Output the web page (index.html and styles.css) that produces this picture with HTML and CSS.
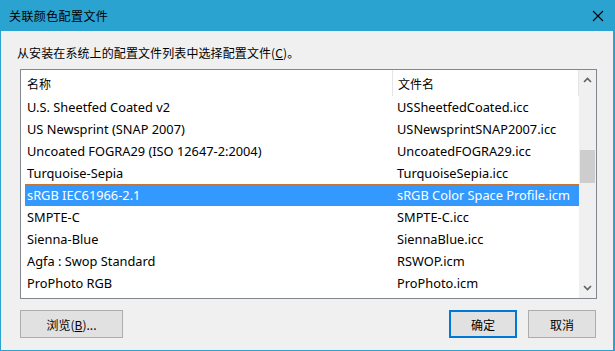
FILE: index.html
```html
<!DOCTYPE html>
<html lang="zh-CN">
<head>
    <meta charset="UTF-8">
    <title>关联颜色配置文件</title>
    <link rel="stylesheet" href="styles.css">
</head>
<body>
    <div class="window">
        <div class="titlebar">
            <span class="title">关联颜色配置文件</span>
            <svg class="close" width="12" height="12" viewBox="0 0 12 12">
                <path d="M1 1 L11 11 M11 1 L1 11" stroke="#000" stroke-width="1.1" fill="none"/>
            </svg>
        </div>

        <div class="content">
            <p class="label">从安装在系统上的配置文件列表中选择配置文件(<u>C</u>)。</p>

            <div class="listbox">
                <div class="list">
                    <div class="header">
                        <div class="col name">名称</div>
                        <div class="col file">文件名</div>
                    </div>
                    <div class="rows">
                        <div class="row"><span class="col name">U.S. Sheetfed Coated v2</span><span class="col file">USSheetfedCoated.icc</span></div>
                        <div class="row"><span class="col name">US Newsprint (SNAP 2007)</span><span class="col file">USNewsprintSNAP2007.icc</span></div>
                        <div class="row"><span class="col name">Uncoated FOGRA29 (ISO 12647-2:2004)</span><span class="col file">UncoatedFOGRA29.icc</span></div>
                        <div class="row"><span class="col name">Turquoise-Sepia</span><span class="col file">TurquoiseSepia.icc</span></div>
                        <div class="row selected"><span class="col name">sRGB IEC61966-2.1</span><span class="col file">sRGB Color Space Profile.icm</span></div>
                        <div class="row"><span class="col name">SMPTE-C</span><span class="col file">SMPTE-C.icc</span></div>
                        <div class="row"><span class="col name">Sienna-Blue</span><span class="col file">SiennaBlue.icc</span></div>
                        <div class="row"><span class="col name">Agfa : Swop Standard</span><span class="col file">RSWOP.icm</span></div>
                        <div class="row"><span class="col name">ProPhoto RGB</span><span class="col file">ProPhoto.icm</span></div>
                    </div>
                </div>
                <div class="scrollbar">
                    <svg class="arrow" width="9" height="6" viewBox="0 0 9 6">
                        <path d="M1 5 L4.5 1.5 L8 5" stroke="#606060" stroke-width="1.6" fill="none"/>
                    </svg>
                    <div class="track">
                        <div class="thumb"></div>
                    </div>
                    <svg class="arrow" width="9" height="6" viewBox="0 0 9 6">
                        <path d="M1 1 L4.5 4.5 L8 1" stroke="#606060" stroke-width="1.6" fill="none"/>
                    </svg>
                </div>
            </div>

            <div class="buttons">
                <button class="btn browse">浏览(<u>B</u>)...</button>
                <div class="spacer"></div>
                <button class="btn default">确定</button>
                <button class="btn">取消</button>
            </div>
        </div>
    </div>
</body>
</html>
```

FILE: styles.css
```css
* {
    margin: 0;
    padding: 0;
    box-sizing: border-box;
}

body {
    font-family: 'Noto Sans', 'Noto Sans CJK SC', sans-serif;
    font-size: 12px;
    color: #000;
    background: #f0f0f0;
}

.window {
    width: 615px;
    height: 351px;
    border: 1px solid #2ba3d0;
    border-top: none;
    border-right-width: 2px;
    background: #f0f0f0;
}

.titlebar {
    height: 31px;
    margin: 0 -2px 0 -1px;
    background: #2ba3d0;
    display: flex;
    align-items: center;
    justify-content: space-between;
    padding: 0 11px 0 9px;
}

.title {
    font-family: 'Noto Sans CJK SC', sans-serif;
    font-size: 12px;
    letter-spacing: 0.4px;
}

.close {
    display: block;
}

.content {
    padding: 12px 17px 0 16px;
}

.label {
    font-family: 'Noto Sans CJK SC', sans-serif;
    line-height: 20px;
    letter-spacing: 0.1px;
    margin-bottom: 6px;
}

.listbox {
    margin-left: 3px;
    width: 577px;
    height: 230px;
    border: 1px solid #828790;
    background: #fff;
    display: flex;
}

.list {
    flex: 1;
    overflow: hidden;
}

.header {
    height: 26px;
    display: flex;
    align-items: center;
}

.header .col {
    font-family: 'Noto Sans CJK SC', sans-serif;
    height: 100%;
    display: flex;
    align-items: center;
}

.header .file {
    border-left: 1px solid #e5e5e5;
    border-right: 1px solid #e5e5e5;
    padding-left: 5px;
}

.col.name {
    width: 371px;
    padding-left: 6px;
}

.col.file {
    flex: 1;
}

.rows {
    padding-left: 4px;
    font-size: 12.8px;
}

.row {
    height: 22px;
    display: flex;
    align-items: center;
    white-space: nowrap;
}

.row .name {
    width: 367px;
    padding-left: 2px;
}

.row .file {
    padding-left: 5px;
}

.row.selected {
    background: #3399ff;
    color: #fff;
    outline: 1px dotted #c8742e;
    outline-offset: -1px;
}

.scrollbar {
    width: 17px;
    background: #f0f0f0;
    display: flex;
    flex-direction: column;
    align-items: center;
}

.arrow {
    display: block;
    margin: 7px 0 4px;
}

.scrollbar .arrow:last-child {
    margin: 4px 0 7px;
}

.track {
    flex: 1;
    width: 100%;
    padding: 63px 1px 0;
}

.thumb {
    height: 33px;
    background: #cdcdcd;
}

.buttons {
    display: flex;
    margin-top: 11px;
    margin-left: 3px;
}

.spacer {
    flex: 1;
}

.btn {
    font-family: 'Noto Sans CJK SC', sans-serif;
    font-size: 12px;
    height: 28px;
    width: 68px;
    background: #e1e1e1;
    border: 1px solid #adadad;
    color: #000;
}

.btn.browse {
    width: 103px;
}

.btn.default {
    border: 2px solid #0078d7;
    margin-right: 11px;
}
```
